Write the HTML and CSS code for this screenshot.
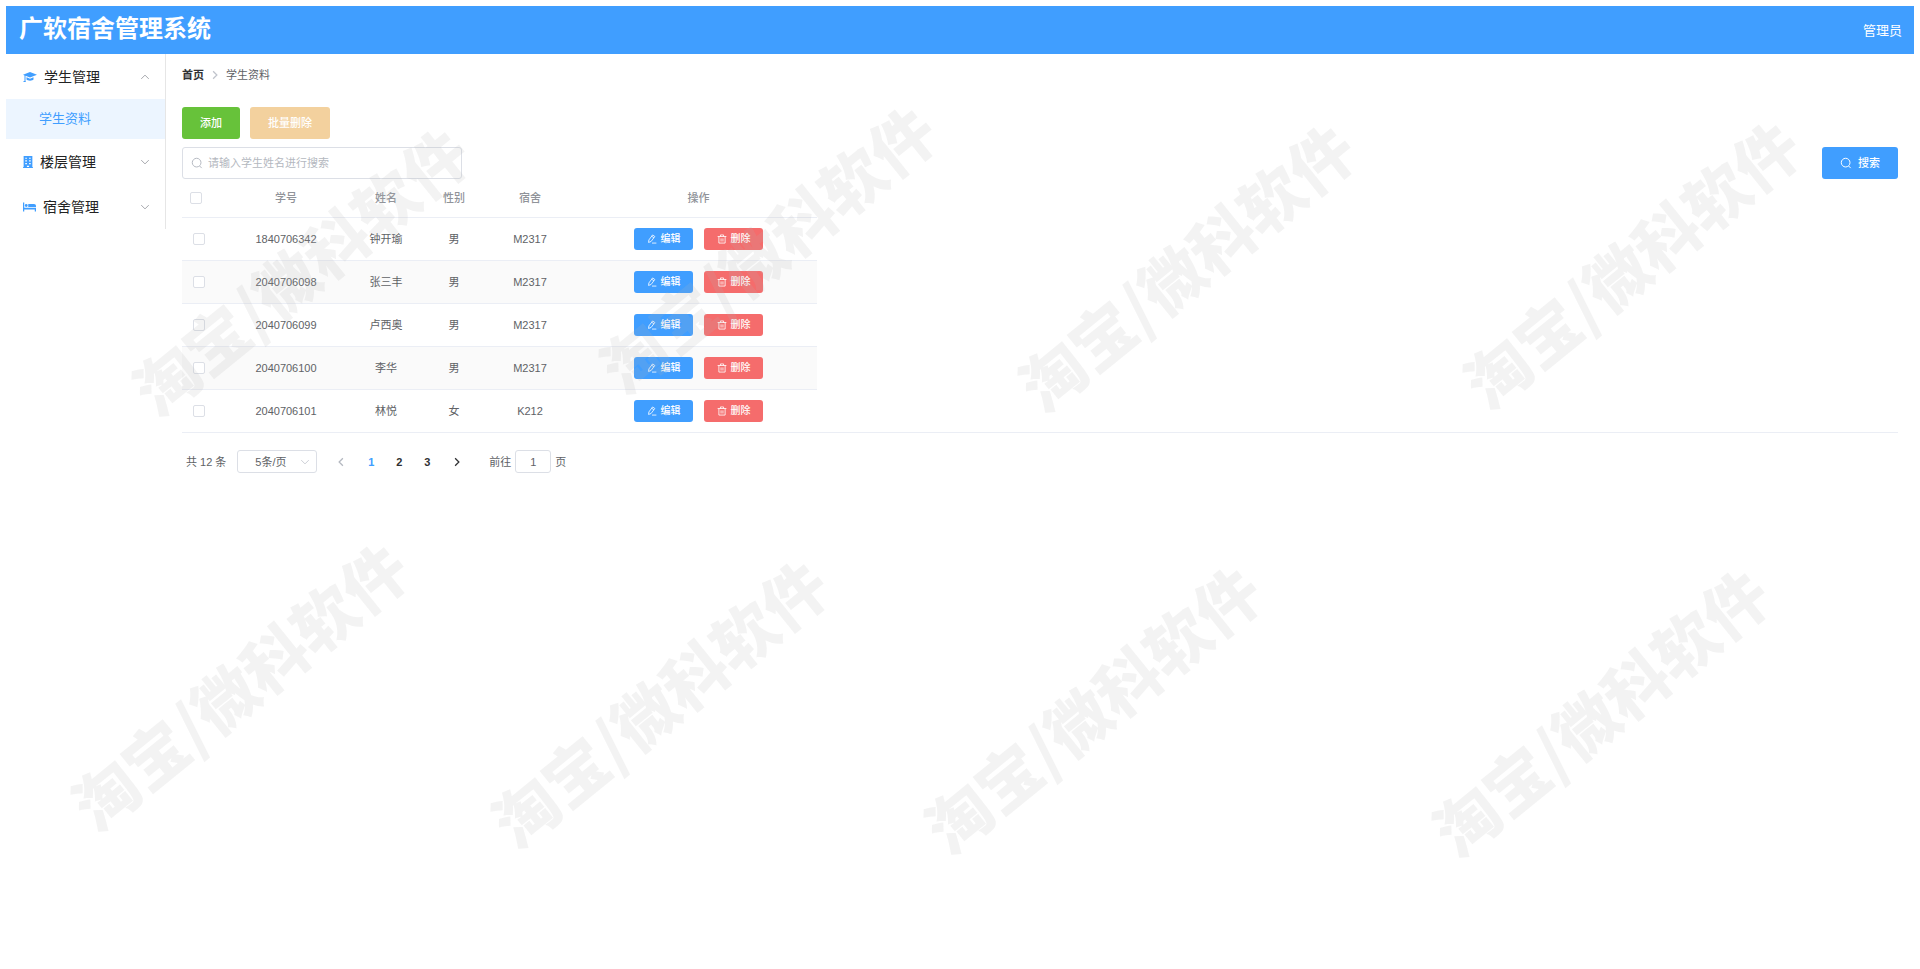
FILE: index.html
```
<!DOCTYPE html>
<html lang="zh-CN">
<head>
  <meta charset="UTF-8">
  <title>广软宿舍管理系统</title>
  <link rel="stylesheet" href="styles.css">
</head>
<body>
  <svg class="sprite" aria-hidden="true">
    <symbol id="icon-search" viewBox="0 0 16 16"><circle cx="7.5" cy="7.5" r="5.8"/><path d="M11.5 12l2.8 2.8"/></symbol>
    <symbol id="icon-down" viewBox="0 0 16 16"><path d="M2 5l6 6 6-6"/></symbol>
    <symbol id="icon-up" viewBox="0 0 16 16"><path d="M2 11l6-6 6 6"/></symbol>
    <symbol id="icon-left" viewBox="0 0 16 16"><path d="M11 2L5 8l6 6"/></symbol>
    <symbol id="icon-right" viewBox="0 0 16 16"><path d="M5 2l6 6-6 6"/></symbol>
    <symbol id="icon-edit" viewBox="0 0 16 16"><path d="M3 9.5L9 1.5l3.5 2.5-6 8L2.5 13.500zM8 14.500h7M7.500 3.500l3.500 2.500"/></symbol>
    <symbol id="icon-delete" viewBox="0 0 16 16"><path d="M1 4h14M5.500 4V1.500h5V4M3 4v10.500h10V4M6.500 7v5M9.500 7v5"/></symbol>
  </svg>

  <header class="header">
    <h1 class="title">广软宿舍管理系统</h1>
    <span class="user">管理员</span>
  </header>

  <div class="container">
    <nav class="aside">
      <button class="menu-title" type="button">
        <svg class="menu-icon cap" viewBox="0 0 28 20"><path d="M14 0L0 5.500l3 1.300V18H1v2h5l-1-2V7.600l9 3.600 14-5.700z"/><path d="M7 10.500V15c2 3 12 3 14 0v-4.500l-7 3z"/></svg>
        <span>学生管理</span>
        <svg class="arrow"><use href="#icon-up"/></svg>
      </button>
      <a class="menu-item active" href="#">学生资料</a>
      <button class="menu-title" type="button">
        <svg class="menu-icon building" viewBox="0 0 18 22"><path fill-rule="evenodd" d="M1 0h16v20h1v2H0v-2h1zM4 3v2h3V3zm7 0v2h3V3zM4 8v2h3V8zm7 0v2h3V8zm-7 5v2h3v-2zm7 0v2h3v-2zm-4 5v2h4v-2z"/></svg>
        <span>楼层管理</span>
        <svg class="arrow"><use href="#icon-down"/></svg>
      </button>
      <button class="menu-title" type="button">
        <svg class="menu-icon bed" viewBox="0 0 26 18"><path d="M0 0h2.500v10.500H26V18h-2.500v-4h-21v4H0zM10.500 3H22c2.500 0 4 1.500 4 4v2H10.500z"/><circle cx="6.500" cy="6" r="2.800"/></svg>
        <span>宿舍管理</span>
        <svg class="arrow"><use href="#icon-down"/></svg>
      </button>
    </nav>

    <main class="main">
      <nav class="breadcrumb">
        <a href="#">首页</a>
        <svg><use href="#icon-right"/></svg>
        <span>学生资料</span>
      </nav>

      <div class="toolbar">
        <button class="btn success" type="button">添加</button>
        <button class="btn warning" type="button" disabled>批量删除</button>
      </div>

      <form class="search">
        <label class="search-box">
          <svg><use href="#icon-search"/></svg>
          <input type="text" placeholder="请输入学生姓名进行搜索" aria-label="学生姓名">
        </label>
        <button class="btn primary" type="button"><svg><use href="#icon-search"/></svg>搜索</button>
      </form>

      <div class="table-wrap">
        <table class="table">
          <colgroup>
            <col class="col-check"><col class="col-id"><col class="col-name"><col class="col-sex"><col class="col-room"><col class="col-action">
          </colgroup>
          <thead>
            <tr>
              <th><input type="checkbox" aria-label="全选"></th>
              <th>学号</th>
              <th>姓名</th>
              <th>性别</th>
              <th>宿舍</th>
              <th>操作</th>
            </tr>
          </thead>
          <tbody>
            <tr>
              <td><input type="checkbox" aria-label="钟开瑜"></td>
              <td>1840706342</td>
              <td>钟开瑜</td>
              <td>男</td>
              <td>M2317</td>
              <td>
                <div class="actions">
                  <button class="mini primary" type="button"><svg><use href="#icon-edit"/></svg>编辑</button>
                  <button class="mini danger" type="button"><svg><use href="#icon-delete"/></svg>删除</button>
                </div>
              </td>
            </tr>
            <tr>
              <td><input type="checkbox" aria-label="张三丰"></td>
              <td>2040706098</td>
              <td>张三丰</td>
              <td>男</td>
              <td>M2317</td>
              <td>
                <div class="actions">
                  <button class="mini primary" type="button"><svg><use href="#icon-edit"/></svg>编辑</button>
                  <button class="mini danger" type="button"><svg><use href="#icon-delete"/></svg>删除</button>
                </div>
              </td>
            </tr>
            <tr>
              <td><input type="checkbox" aria-label="卢西奥"></td>
              <td>2040706099</td>
              <td>卢西奥</td>
              <td>男</td>
              <td>M2317</td>
              <td>
                <div class="actions">
                  <button class="mini primary" type="button"><svg><use href="#icon-edit"/></svg>编辑</button>
                  <button class="mini danger" type="button"><svg><use href="#icon-delete"/></svg>删除</button>
                </div>
              </td>
            </tr>
            <tr>
              <td><input type="checkbox" aria-label="李华"></td>
              <td>2040706100</td>
              <td>李华</td>
              <td>男</td>
              <td>M2317</td>
              <td>
                <div class="actions">
                  <button class="mini primary" type="button"><svg><use href="#icon-edit"/></svg>编辑</button>
                  <button class="mini danger" type="button"><svg><use href="#icon-delete"/></svg>删除</button>
                </div>
              </td>
            </tr>
            <tr>
              <td><input type="checkbox" aria-label="林悦"></td>
              <td>2040706101</td>
              <td>林悦</td>
              <td>女</td>
              <td>K212</td>
              <td>
                <div class="actions">
                  <button class="mini primary" type="button"><svg><use href="#icon-edit"/></svg>编辑</button>
                  <button class="mini danger" type="button"><svg><use href="#icon-delete"/></svg>删除</button>
                </div>
              </td>
            </tr>
          </tbody>
        </table>
      </div>

      <div class="pagination">
        <span>共 12 条</span>
        <div class="page-size">
          <select aria-label="每页条数">
            <option>5条/页</option>
            <option>10条/页</option>
          </select>
          <svg><use href="#icon-down"/></svg>
        </div>
        <div class="pager">
          <button class="prev" type="button" aria-label="上一页" disabled><svg><use href="#icon-left"/></svg></button>
          <button class="current" type="button">1</button>
          <button type="button">2</button>
          <button type="button">3</button>
          <button class="next" type="button" aria-label="下一页"><svg><use href="#icon-right"/></svg></button>
        </div>
        <label class="jump">前往<input type="text" value="1">页</label>
      </div>
    </main>
  </div>

  <div class="watermarks" aria-hidden="true">
    <span class="mark mark-1">淘宝/微科软件</span>
    <span class="mark mark-2">淘宝/微科软件</span>
    <span class="mark mark-3">淘宝/微科软件</span>
    <span class="mark mark-4">淘宝/微科软件</span>
    <span class="mark mark-5">淘宝/微科软件</span>
    <span class="mark mark-6">淘宝/微科软件</span>
    <span class="mark mark-7">淘宝/微科软件</span>
    <span class="mark mark-8">淘宝/微科软件</span>
  </div>
</body>
</html>
```
FILE: styles.css
```
* {
  box-sizing: border-box;
}

body {
  margin: 0;
  padding: 6px;
  min-height: 100vh;
  position: relative;
  background: #fff;
  color: #606266;
  font-family: "Liberation Sans", "Noto Sans CJK SC", sans-serif;
  font-size: 11px;
  line-height: 16px;
}

button, input, select {
  font: inherit;
  color: inherit;
  margin: 0;
}

button {
  border: none;
  padding: 0;
  background: none;
  cursor: pointer;
}

a {
  text-decoration: none;
}

svg {
  width: 10px;
  height: 10px;
  flex: none;
  fill: none;
  stroke: currentColor;
  stroke-width: 1.3;
}

.sprite {
  display: none;
}

/* header */
.header {
  display: flex;
  justify-content: space-between;
  height: 48px;
  padding: 0 12px 0 13px;
  background: #409eff;
  color: #fff;
}

.title {
  margin: 0;
  font-family: STXingkai, "Noto Sans CJK SC", sans-serif;
  font-size: 24px;
  font-weight: 700;
  line-height: 42px;
}

.user {
  font-size: 13px;
  line-height: 50px;
}

.container {
  display: flex;
  align-items: flex-start;
}

/* side menu */
.aside {
  width: 160px;
  flex: none;
  border-right: 1px solid #e6e6e6;
}

.menu-title {
  display: flex;
  align-items: center;
  width: 100%;
  height: 45px;
  padding: 0 15px 0 17px;
  color: #222;
  font-size: 14px;
  text-align: left;
}

.menu-title span {
  margin-left: 7px;
}

.menu-title .arrow {
  margin-left: auto;
  color: #909399;
}

.menu-icon {
  fill: #409eff;
  stroke: none;
}

.cap {
  width: 14px;
}

.building {
  height: 12px;
}

.bed {
  width: 13px;
}

.menu-item {
  display: block;
  padding-left: 33px;
  font-size: 13px;
  line-height: 40px;
  color: #409eff;
}

.menu-item.active {
  background: #ecf5ff;
}

/* content */
.main {
  flex: 1;
  padding: 13px 16px 0;
}

.breadcrumb {
  display: flex;
  align-items: center;
  gap: 6px;
  margin-bottom: 24px;
}

.breadcrumb a {
  color: #303133;
  font-weight: 700;
}

.breadcrumb svg {
  color: #c0c4cc;
  stroke-width: 2;
}

.toolbar {
  display: flex;
  gap: 10px;
}

.btn {
  display: flex;
  align-items: center;
  justify-content: center;
  gap: 6px;
  height: 32px;
  padding: 0 18px;
  border-radius: 3px;
  color: #fff;
  font-weight: 500;
}

.success {
  background: #67c23a;
}

.warning {
  background: #f3d19e;
}

.primary {
  background: #409eff;
}

.danger {
  background: #f56c6c;
}

.search {
  display: flex;
  justify-content: space-between;
  margin-top: 8px;
}

.search svg {
  width: 12px;
  height: 12px;
}

.search-box {
  display: flex;
  align-items: center;
  gap: 5px;
  width: 280px;
  height: 32px;
  padding: 0 8px;
  border: 1px solid #dcdfe6;
  border-radius: 3px;
  color: #b4b8c0;
}

.search-box input {
  flex: 1;
  min-width: 0;
  padding: 0;
  border: none;
  outline: none;
  background: none;
  color: #606266;
}

.search-box input::placeholder {
  color: #b4b8c0;
}

/* table */
.table-wrap {
  border-bottom: 1px solid #ebeef5;
}

.table {
  width: 635px;
  table-layout: fixed;
  border-collapse: separate;
  border-spacing: 0;
  text-align: center;
}

.col-check {
  width: 46px;
}

.col-id {
  width: 116px;
}

.col-name {
  width: 84px;
}

.col-sex {
  width: 52px;
}

.col-room {
  width: 100px;
}

.table th,
.table td {
  height: 43px;
  padding: 0;
  border-bottom: 1px solid #ebeef5;
}

.table th {
  height: 39px;
  color: #909399;
  font-weight: 500;
}

.table tbody tr:nth-child(even) {
  background: #fafafa;
}

.table tbody tr:last-child td {
  height: 42px;
  border-bottom: none;
}

.table th:first-child {
  padding-left: 8px;
  text-align: left;
}

.table td:first-child {
  padding-left: 11px;
  text-align: left;
}

.table input {
  appearance: none;
  display: block;
  width: 12px;
  height: 12px;
  border: 1px solid #dcdfe6;
  border-radius: 2px;
  background: #fff;
}

.actions {
  display: flex;
  justify-content: center;
  gap: 11px;
}

.mini {
  display: flex;
  align-items: center;
  justify-content: center;
  gap: 4px;
  width: 59px;
  height: 22px;
  border-radius: 3px;
  color: #fff;
  font-size: 10px;
  font-weight: 500;
}

/* pagination */
.pagination {
  display: flex;
  align-items: center;
  margin-top: 17px;
  padding-left: 4px;
}

.page-size {
  display: flex;
  align-items: center;
  width: 80px;
  height: 23px;
  margin-left: 11px;
  padding-right: 6px;
  border: 1px solid #dcdfe6;
  border-radius: 3px;
}

.page-size select {
  appearance: none;
  flex: 1;
  min-width: 0;
  padding: 0 0 0 17px;
  border: none;
  background: none;
}

.page-size svg {
  color: #c0c4cc;
}

.pager {
  display: flex;
  margin-left: 8px;
}

.pager svg {
  stroke-width: 2;
}

.pager button {
  display: flex;
  align-items: center;
  justify-content: center;
  width: 28px;
  height: 22px;
  color: #303133;
  font-weight: 700;
}

.pager button.current {
  color: #409eff;
}

.pager button.prev,
.pager button.next {
  width: 32px;
}

.pager button.prev {
  color: #b4b8c0;
}

.jump {
  display: flex;
  align-items: center;
  gap: 4px;
  margin-left: 16px;
}

.jump input {
  width: 36px;
  height: 23px;
  padding: 0;
  border: 1px solid #dcdfe6;
  border-radius: 3px;
  text-align: center;
}

/* watermark layer above the page */
.watermarks {
  position: absolute;
  inset: 0;
  overflow: hidden;
  pointer-events: none;
}

.mark {
  position: absolute;
  transform: translate(-50%, -50%) rotate(-39deg);
  color: rgba(180, 180, 180, 0.16);
  font-family: "Noto Sans CJK SC", sans-serif;
  font-size: 64px;
  font-weight: 900;
  line-height: 64px;
  white-space: nowrap;
}

.mark-1 {
  left: 299px;
  top: 269px;
}

.mark-2 {
  left: 766px;
  top: 247px;
}

.mark-3 {
  left: 1185px;
  top: 265px;
}

.mark-4 {
  left: 1630px;
  top: 262px;
}

.mark-5 {
  left: 238px;
  top: 684px;
}

.mark-6 {
  left: 658px;
  top: 701px;
}

.mark-7 {
  left: 1091px;
  top: 707px;
}

.mark-8 {
  left: 1599px;
  top: 710px;
}
```
